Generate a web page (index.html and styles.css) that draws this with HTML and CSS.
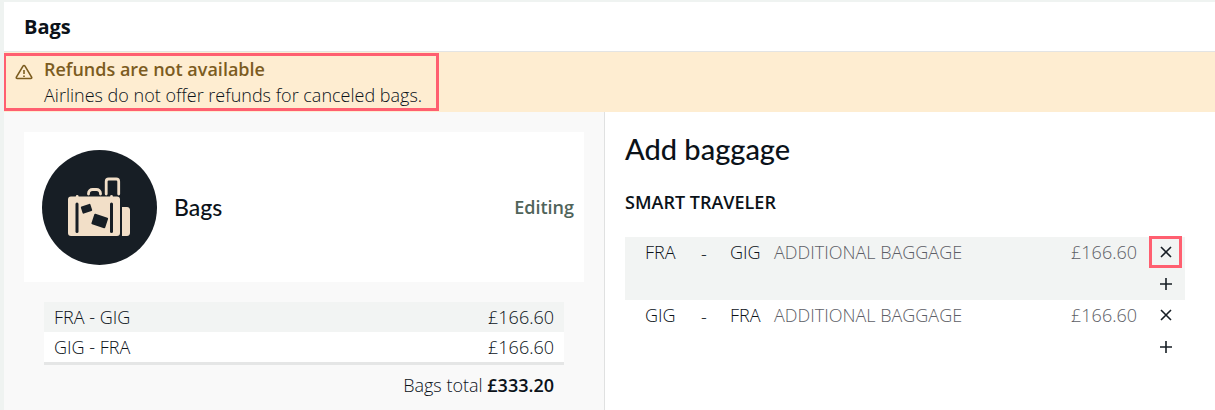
FILE: index.html
```
<!DOCTYPE html>
<html lang="en">
  <head>
    <meta charset="UTF-8" />
    <meta name="viewport" content="width=device-width, initial-scale=1.0" />
    <title>Bags</title>
    <link rel="stylesheet" href="styles.css">
  </head>
  <body>
    <header class="header">
      <h1>Bags</h1>
    </header>
    <div class="notice">
      <div class="notice-box marked">
        <svg class="notice-icon" viewBox="0 0 18 16" aria-hidden="true">
          <path d="M8 2.1 1.4 13.2c-.4.8 0 1.3.8 1.3h13.6c.8 0 1.2-.5.8-1.3L10 2.1c-.5-.8-1.5-.8-2 0z" />
          <path d="M9 6v4M9 11.5v1.6" />
        </svg>
        <div>
          <p class="notice-title">Refunds are not available</p>
          <p>Airlines do not offer refunds for canceled bags.</p>
        </div>
      </div>
    </div>
    <main class="columns">
      <section class="overview">
        <div class="card">
          <svg class="card-icon" viewBox="0 0 115 115" aria-hidden="true">
            <circle cx="57.5" cy="57.5" r="57.5" fill="#171e25" />
            <g fill="none" stroke="#f2dfc8" stroke-width="2.8" stroke-linecap="round">
              <path d="M46.5 44v-.5c0-2.5 2-4 4-4h4c2 0 4 1.5 4 4v.5" />
              <path d="M64.2 44V31.5c0-1.5 1-2.5 2.5-2.5h7.500c1.5 0 2.500 1 2.500 2.500V44" />
              <path d="M35.200 46.500v.5M69.500 46.500v.5" />
            </g>
            <rect x="26" y="46.5" width="52" height="39.5" rx="3" fill="#f2dfc8" />
            <path d="M80 57h5c2 0 3 1.5 3 3v23c0 1.5-1 3-3 3h-5z" fill="#f2dfc8" />
            <g fill="#171e25">
              <rect x="33.5" y="52.5" width="3" height="30.5" rx="1.5" />
              <rect x="68" y="52.5" width="3" height="30.5" rx="1.5" />
              <rect x="39.5" y="55" width="10" height="7.5" rx="1" transform="rotate(-18 44.5 58.7)" />
              <rect x="50.5" y="65.5" width="14.5" height="11" rx="1" transform="rotate(18 57.7 71)" />
            </g>
          </svg>
          <h2>Bags</h2>
          <span class="status">Editing</span>
        </div>
        <div class="summary">
          <table class="summary-table">
            <tr>
              <td>FRA - GIG</td>
              <td class="amount">£166.60</td>
            </tr>
            <tr>
              <td>GIG - FRA</td>
              <td class="amount">£166.60</td>
            </tr>
          </table>
          <p class="total">Bags total <strong>£333.20</strong></p>
        </div>
      </section>
      <section class="editor">
        <h2>Add baggage</h2>
        <h3>SMART TRAVELER</h3>
        <table class="bag-table">
          <tr>
            <td class="from">FRA</td>
            <td class="dash">-</td>
            <td class="to">GIG</td>
            <td class="item">ADDITIONAL BAGGAGE</td>
            <td class="price">£166.60</td>
            <td class="actions">
              <button type="button" class="marked" aria-label="Remove bag">
                <svg viewBox="0 0 14 14"><path d="M2 2l10 10M12 2 2 12" /></svg>
              </button>
              <button type="button" aria-label="Add bag">
                <svg viewBox="0 0 14 14"><path d="M1 7h12M7 1v12" /></svg>
              </button>
            </td>
          </tr>
          <tr>
            <td class="from">GIG</td>
            <td class="dash">-</td>
            <td class="to">FRA</td>
            <td class="item">ADDITIONAL BAGGAGE</td>
            <td class="price">£166.60</td>
            <td class="actions">
              <button type="button" aria-label="Remove bag">
                <svg viewBox="0 0 14 14"><path d="M2 2l10 10M12 2 2 12" /></svg>
              </button>
              <button type="button" aria-label="Add bag">
                <svg viewBox="0 0 14 14"><path d="M1 7h12M7 1v12" /></svg>
              </button>
            </td>
          </tr>
        </table>
      </section>
    </main>
  </body>
</html>
```

FILE: styles.css
```
* {
  box-sizing: border-box;
  padding: 0;
  margin: 0;
}
body {
  display: flex;
  flex-direction: column;
  min-height: 100vh;
  border-top: 2px solid #eff3f1;
  border-left: 4px solid #eff3f1;
  background: #fff;
  color: #0b1219;
  font-family: "Open Sans", "Noto Sans", sans-serif;
  font-size: 18px;
  font-weight: 300;
  line-height: 24px;
}
table {
  width: 100%;
  border-collapse: collapse;
}
.marked {
  outline: 3px solid #ff5f70;
}
.header {
  padding: 13px 20px 12px;
  border-bottom: 1px solid #e3e4e4;
}
.header h1 {
  font-size: 20px;
  font-weight: 700;
}
.notice {
  display: flex;
  padding: 4px 2px;
  background: #feedd1;
}
.notice-box {
  display: flex;
  gap: 11px;
  padding: 1px 14px 1px 9px;
}
.notice-icon {
  width: 18px;
  height: 16px;
  margin-top: 7px;
  fill: none;
  stroke: #7c5c1f;
  stroke-width: 1.6;
}
.notice-title {
  margin-bottom: 2px;
  color: #7c5c1f;
  font-weight: 600;
}
.columns {
  flex: 1;
  display: grid;
  grid-template-columns: 601fr 610fr;
}
h2 {
  font-family: Lato, sans-serif;
  font-weight: 500;
}
.overview {
  padding: 20px;
  border-right: 1px solid #e0e1e1;
  background: #f9f9f9;
}
.card {
  display: flex;
  align-items: center;
  gap: 17px;
  min-height: 150px;
  padding: 17px 10px 17px 18px;
  background: #fff;
}
.card-icon {
  width: 115px;
  height: 115px;
}
.card h2 {
  font-size: 23px;
}
.status {
  margin-left: auto;
  color: #50645a;
  font-weight: 600;
}
.summary {
  padding: 20px 20px 0;
}
.summary-table {
  border-bottom: 3px solid #e5e6e6;
}
.summary-table td {
  padding: 3px 10px;
}
.summary-table tr {
  background: #fff;
}
.summary-table tr:first-child,
.bag-table tr:first-child {
  background: #f2f4f3;
}
.summary-table .amount {
  text-align: right;
}
.total {
  padding: 8px 10px;
  text-align: right;
}
.total strong {
  font-weight: 600;
}
.editor {
  padding: 20px 30px 20px 20px;
}
.editor h2 {
  font-size: 29px;
  line-height: 34px;
}
.editor h3 {
  margin: 24px 0 23px;
  font-size: 18px;
  font-weight: 600;
}
.bag-table td {
  padding-top: 3px;
  vertical-align: top;
}
.bag-table .from {
  width: 76px;
  padding-left: 20px;
}
.bag-table .dash {
  width: 29px;
  padding-top: 5px;
}
.bag-table .to {
  width: 44px;
}
.bag-table .item {
  color: #5d5e66;
}
.bag-table .price {
  padding-right: 15px;
  color: #5d5e66;
  text-align: right;
}
.bag-table .actions {
  width: 33px;
  padding: 2px 6px 3px 0;
}
.actions button {
  display: flex;
  align-items: center;
  justify-content: center;
  width: 27px;
  height: 26px;
  border: none;
  background: none;
}
.actions button + button {
  margin-top: 6px;
}
.actions svg {
  width: 14px;
  height: 14px;
  fill: none;
  stroke: #171e25;
  stroke-width: 1.6;
}
```
